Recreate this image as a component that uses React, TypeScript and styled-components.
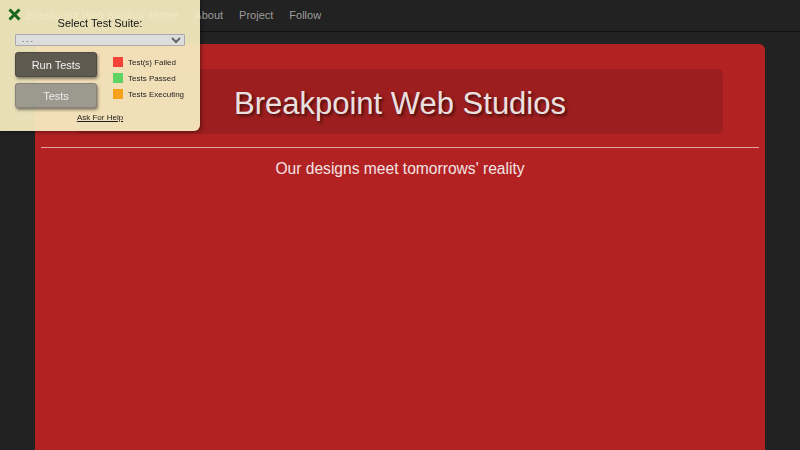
import React from "react";
import styled, { createGlobalStyle } from "styled-components";

const GlobalStyle = createGlobalStyle`
  html, body {
    margin: 0;
    padding: 0;
    background: #222222;
    font-family: "Liberation Sans", Arial, Helvetica, sans-serif;
  }
  * { box-sizing: border-box; }
`;

const Page = styled.div`
  min-height: 100vh;
  display: flex;
  flex-direction: column;
  overflow: hidden;
`;

const Navbar = styled.nav`
  height: 32px;
  display: flex;
  align-items: center;
  background: #222222;
  border-bottom: 1px solid #111111;
  flex-shrink: 0;
  padding-bottom: 1px;
`;

const Brand = styled.a`
  font-size: 11px;
  color: #9d9d9d;
  padding: 0 6px 0 26px;
  text-decoration: none;
  width: 141px;
  white-space: nowrap;
`;

const NavLinks = styled.ul`
  display: flex;
  list-style: none;
  margin: 0;
  padding: 0;
`;

const NavLink = styled.li`
  font-size: 11px;
  color: #9d9d9d;
  padding: 0 8px;
`;

const Container = styled.main`
  width: 730px;
  margin: 12px auto 0;
  flex: 1;
  background: #b22222;
  border-radius: 6px 6px 0 0;
  padding: 25px 6px 0;
  display: flex;
  flex-direction: column;
  align-items: stretch;
`;

const Jumbotron = styled.header`
  margin: 0 36px;
  height: 65px;
  background: #9d1e1e;
  border-radius: 5px;
  display: flex;
  align-items: center;
  justify-content: center;
  padding-top: 5px;
`;

const Title = styled.h1`
  margin: 0;
  font-weight: normal;
  font-size: 31px;
  color: #ebe0e0;
  text-shadow: 2px 2px 3px rgba(0, 0, 0, 0.55);
`;

const Rule = styled.hr`
  margin: 13px 0 0;
  border: none;
  border-top: 1px solid #e9a3a3;
`;

const Tagline = styled.p`
  margin: 11px 0 0;
  text-align: center;
  font-size: 15.6px;
  line-height: 20px;
  color: #f2e4e4;
`;

const Panel = styled.aside`
  position: fixed;
  top: 0;
  left: 0;
  width: 200px;
  height: 131px;
  background: rgba(248, 238, 195, 0.93);
  border-bottom-right-radius: 6px;
  box-shadow: 1px 1px 4px rgba(0, 0, 0, 0.45);
  padding: 17px 15px 0;
  display: flex;
  flex-direction: column;
  align-items: stretch;
`;

const CloseButton = styled.button`
  position: absolute;
  top: 7px;
  left: 7px;
  width: 15px;
  height: 15px;
  padding: 0;
  border: none;
  background: transparent;
  display: flex;
  cursor: pointer;
`;

const PanelTitle = styled.div`
  font-size: 11px;
  line-height: 13px;
  color: #141414;
  text-align: center;
`;

const SuiteSelect = styled.select`
  margin-top: 4px;
  width: 170px;
  height: 12px;
  font-size: 7px;
  font-family: "Liberation Sans", Arial, sans-serif;
  color: #666;
  background-color: #dddddd;
  border: 1px solid #a9a9a9;
  border-radius: 1px;
  padding: 0 2px;
`;

const Body = styled.div`
  margin-top: 6px;
  display: flex;
  gap: 16px;
`;

const Buttons = styled.div`
  display: flex;
  flex-direction: column;
  gap: 6px;
`;

const ActionButton = styled.button<{ $tone: "dark" | "light" }>`
  width: 82px;
  height: 25px;
  border: 1px solid ${(p) => (p.$tone === "dark" ? "#4d4a40" : "#85827a")};
  border-radius: 3px;
  background: ${(p) => (p.$tone === "dark" ? "#5e5a4f" : "#9c998e")};
  color: ${(p) => (p.$tone === "dark" ? "#f2f2f2" : "#ececec")};
  font-family: "Liberation Sans", Arial, sans-serif;
  font-size: 11px;
  box-shadow: 1px 2px 3px rgba(0, 0, 0, 0.45);
  padding: 0;
`;

const Legend = styled.ul`
  list-style: none;
  margin: 5px 0 0;
  padding: 0;
  display: flex;
  flex-direction: column;
  gap: 6px;
`;

const LegendItem = styled.li`
  display: flex;
  align-items: center;
  gap: 5px;
  height: 10px;
  font-size: 8px;
  color: #1e1e1e;
`;

const Swatch = styled.span<{ $color: string }>`
  width: 10px;
  height: 10px;
  background: ${(p) => p.$color};
  flex-shrink: 0;
`;

const HelpLink = styled.a`
  margin-top: 5px;
  align-self: center;
  font-size: 8px;
  line-height: 10px;
  color: #1e1e1e;
  text-decoration: underline;
`;

export default function App() {
  return (
    <Page>
      <GlobalStyle />
      <Navbar>
        <Brand>Breakpoint Web Studios</Brand>
        <NavLinks>
          <NavLink>Home</NavLink>
          <NavLink>About</NavLink>
          <NavLink>Project</NavLink>
          <NavLink>Follow</NavLink>
        </NavLinks>
      </Navbar>
      <Container>
        <Jumbotron>
          <Title>Breakpoint Web Studios</Title>
        </Jumbotron>
        <Rule />
        <Tagline>Our designs meet tomorrows' reality</Tagline>
      </Container>
      <Panel>
        <CloseButton aria-label="Close">
          <svg width="15" height="15" viewBox="0 0 15 15">
            <path d="M2.5 2.5 L12.5 12.5 M12.5 2.5 L2.5 12.5" stroke="#17661a" strokeWidth="3" strokeLinecap="butt" />
          </svg>
        </CloseButton>
        <PanelTitle>Select Test Suite:</PanelTitle>
        <SuiteSelect defaultValue="none">
          <option value="none">- - -</option>
        </SuiteSelect>
        <Body>
          <Buttons>
            <ActionButton $tone="dark">Run Tests</ActionButton>
            <ActionButton $tone="light">Tests</ActionButton>
          </Buttons>
          <Legend>
            <LegendItem>
              <Swatch $color="#f44336" />
              Test(s) Failed
            </LegendItem>
            <LegendItem>
              <Swatch $color="#5fd35f" />
              Tests Passed
            </LegendItem>
            <LegendItem>
              <Swatch $color="#f5a11c" />
              Tests Executing
            </LegendItem>
          </Legend>
        </Body>
        <HelpLink>Ask For Help</HelpLink>
      </Panel>
    </Page>
  );
}
